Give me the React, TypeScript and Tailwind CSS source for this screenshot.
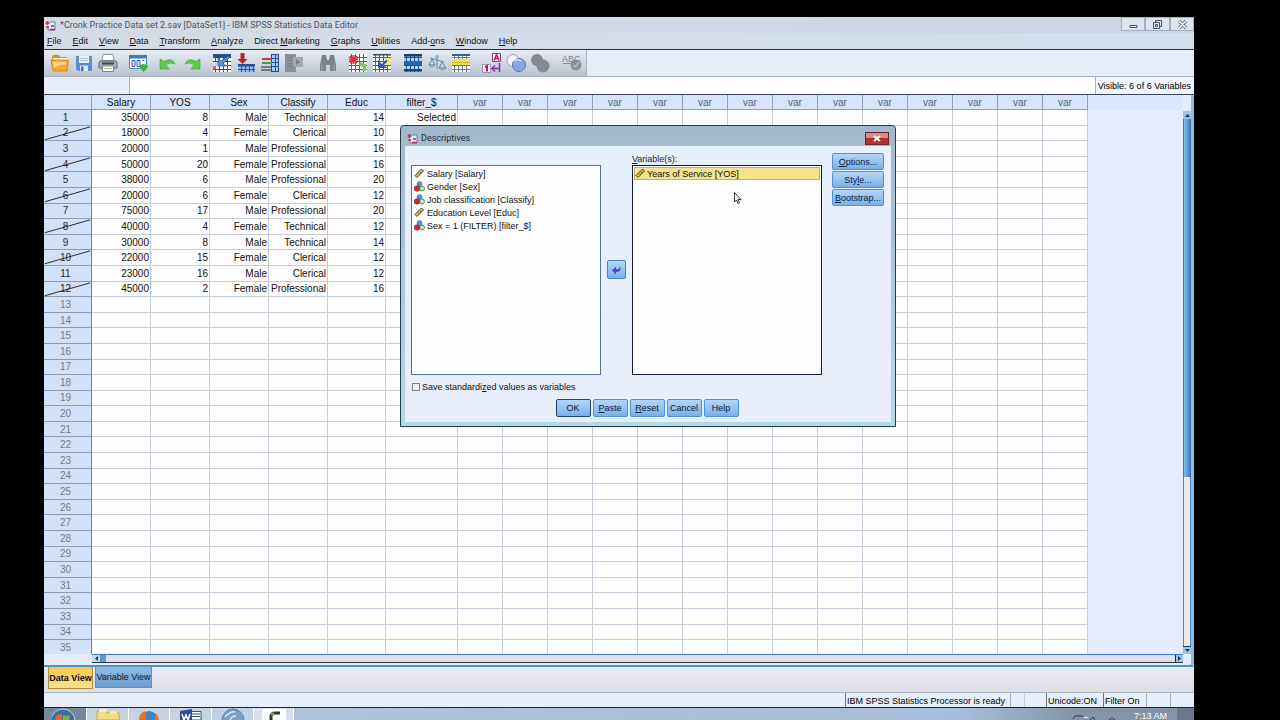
import React from 'react';

type Row = {
  salary: number;
  yos: number;
  sex: string;
  job: string;
  educ: number;
  filter: string;
};

const rows: Row[] = [
  { salary: 35000, yos: 8, sex: 'Male', job: 'Technical', educ: 14, filter: 'Selected' },
  { salary: 18000, yos: 4, sex: 'Female', job: 'Clerical', educ: 10, filter: '' },
  { salary: 20000, yos: 1, sex: 'Male', job: 'Professional', educ: 16, filter: '' },
  { salary: 50000, yos: 20, sex: 'Female', job: 'Professional', educ: 16, filter: '' },
  { salary: 38000, yos: 6, sex: 'Male', job: 'Professional', educ: 20, filter: '' },
  { salary: 20000, yos: 6, sex: 'Female', job: 'Clerical', educ: 12, filter: '' },
  { salary: 75000, yos: 17, sex: 'Male', job: 'Professional', educ: 20, filter: '' },
  { salary: 40000, yos: 4, sex: 'Female', job: 'Technical', educ: 12, filter: '' },
  { salary: 30000, yos: 8, sex: 'Male', job: 'Technical', educ: 14, filter: '' },
  { salary: 22000, yos: 15, sex: 'Female', job: 'Clerical', educ: 12, filter: '' },
  { salary: 23000, yos: 16, sex: 'Male', job: 'Clerical', educ: 12, filter: '' },
  { salary: 45000, yos: 2, sex: 'Female', job: 'Professional', educ: 16, filter: '' },
];

const ROW_COUNT = 35;
const columns = ['Salary', 'YOS', 'Sex', 'Classify', 'Educ', 'filter_$'];
const emptyColumns = Array.from({ length: 14 }, (_, i) => i);

// [before, access key, after]
const menus: [string, string, string][] = [
  ['', 'F', 'ile'],
  ['', 'E', 'dit'],
  ['', 'V', 'iew'],
  ['', 'D', 'ata'],
  ['', 'T', 'ransform'],
  ['', 'A', 'nalyze'],
  ['Direct ', 'M', 'arketing'],
  ['', 'G', 'raphs'],
  ['', 'U', 'tilities'],
  ['Add-', 'o', 'ns'],
  ['', 'W', 'indow'],
  ['', 'H', 'elp'],
];

const Key: React.FC<{ text: [string, string, string] }> = ({ text }) => (
  <span className="whitespace-pre">
    {text[0]}
    <span className="underline">{text[1]}</span>
    {text[2]}
  </span>
);

/* ---------- icons ---------- */

const Svg: React.FC<{ children: React.ReactNode }> = ({ children }) => (
  <svg width="20" height="20" viewBox="0 0 20 20" fill="none" aria-hidden="true">
    {children}
  </svg>
);

const GridLines: React.FC<{ color: string }> = ({ color }) => (
  <path d="M1 4.5h18M1 8.5h18M1 12.5h18M1 16.5h18M3.5 1v18M7.5 1v18M11.5 1v18M15.5 1v18" stroke={color} />
);

const FolderIcon = () => (
  <Svg>
    <path d="M2 4l1-2h6l1 2h7v4H2z" fill="#e08a1e" />
    <path d="M3 5h14v5H3z" fill="#fff6d8" />
    <path d="M1 7h17.5l-1.5 11H3z" fill="#f9a83a" stroke="#e2861c" />
    <path d="M3 9h13l-1 3Q9 11 4 15z" fill="#ffd98a" />
  </Svg>
);

const SaveIcon = () => (
  <Svg>
    <path d="M2 3h16v15H4l-2-2z" fill="#5b8fc9" />
    <path d="M5 3h10v7H5z" fill="#e6f0fb" />
    <path d="M6 5.5h8M6 7.5h8" stroke="#a9c6e6" />
    <path d="M6 12.5h8V18H6z" fill="#dce6ee" />
    <path d="M7 13.5h2.5V18H7z" fill="#4a6f9c" />
  </Svg>
);

const PrintIcon = () => (
  <Svg>
    <path d="M5 1.5h10l1 6H4z" fill="#fff" stroke="#8b98a6" />
    <path d="M2 8h16l1 2v5H1v-5z" fill="#a7afb8" stroke="#5d6771" />
    <path d="M4 10.5h12" stroke="#3f474f" strokeWidth="2" />
    <path d="M4.5 13h11v5.5h-11z" fill="#fff" stroke="#7b8794" />
    <path d="M6 15.5h8" stroke="#9fc66a" />
  </Svg>
);

const RecallIcon = () => (
  <Svg>
    <path d="M1.5 2.5h17v13h-17z" fill="#fff" stroke="#4e86bd" />
    <path d="M1 2h18v3.5H1z" fill="#3f7ab8" />
    <path d="M4 7.5h3v6H4zM9 7.5h3v6H9z" fill="#cfe0f4" stroke="#3b6ea8" />
    <path d="M14 7.5h2.5" stroke="#3b6ea8" />
    <path d="M12 12l3.5-1 4 1v3l-4 4-3.5-4z" fill="#3cb33a" />
  </Svg>
);

const UndoIcon = () => (
  <Svg>
    <path d="M2 6v10h9l-3-3.5q3-4 9-1.5Q14 4 6 8.5z" fill="#5ecb4c" stroke="#3ca634" strokeWidth=".7" />
  </Svg>
);

const RedoIcon = () => (
  <Svg>
    <path d="M18 6v10H9l3-3.5Q9 8.5 3 11q3-7 11-2.5z" fill="#5ecb4c" stroke="#3ca634" strokeWidth=".7" />
  </Svg>
);

const GoToCaseIcon = () => (
  <Svg>
    <path d="M1 1h18v18H1z" fill="#fff" />
    <path d="M1 1h18v4H1z" fill="#1f4f8c" />
    <GridLines color="#27568f" />
    <path d="M1 9h6v4H1z" fill="#c9dff8" />
    <path d="M1 13h3v3H1z" fill="#e45a6b" />
    <path d="M6 5v8h8l-3-2.5 7-6.5-2-1-7 5z" fill="#5b93d6" stroke="#1f4f8c" strokeWidth=".7" />
  </Svg>
);

const GoToVariableIcon = () => (
  <Svg>
    <path d="M2 11h17v8H2z" fill="#8fb9ea" />
    <path d="M2 11h17v2.5H2z" fill="#1f4f8c" />
    <path d="M2 16.5h17M5.5 11v8M9.5 11v8M13.5 11v8M17.5 11v8" stroke="#285a96" />
    <path d="M4.5 0h4v6h3L6.5 11l-5-5h3z" fill="#c3202f" />
  </Svg>
);

const VariablesIcon = () => (
  <Svg>
    <path d="M11 1h8v18h-8z" fill="#a9caf0" />
    <path d="M11 1.5h8M11 5.5h8M11 9.5h8M11 13.5h8M11 18.5h8M11.5 1v18M15.5 1v18M18.5 1v18" stroke="#1f4f8c" />
    <path d="M2 6h10" stroke="#d9303f" strokeWidth="2" />
    <path d="M2 10h10" stroke="#3ca634" strokeWidth="2" />
    <path d="M1 14h10M1 17h10" stroke="#5a5f66" strokeWidth="1.5" />
  </Svg>
);

const RunIcon = () => (
  <Svg>
    <path d="M1 1h11v18H1z" fill="#8b9098" />
    <path d="M9 4h10v10H9z" fill="#a4a9b0" />
    <path d="M12 6l4 3-4 3z" fill="#7a7f87" />
    <path d="M3 4.5h6M3 7.5h5M3 10.5h5M3 13.5h7" stroke="#7a7f87" />
  </Svg>
);

const FindIcon = () => (
  <Svg>
    <path d="M4 2h4l1 5h2l1-5h4l2 10v6h-6v-6H8v6H2v-6z" fill="#7d838b" />
    <path d="M4 12v5M16 12v5" stroke="#a5abb3" />
  </Svg>
);

const InsertCasesIcon = () => (
  <Svg>
    <path d="M1 1h18v18H1z" fill="#fff" />
    <GridLines color="#4a6285" />
    <path d="M2 3l7 7M9 3l-7 7M1 6.5h9M5.5 2v9" stroke="#e0303c" strokeWidth="2" />
    <path d="M12 9l6 2v7h-3v-4l-4-1z" fill="#6fd05e" />
  </Svg>
);

const InsertVariableIcon = () => (
  <Svg>
    <path d="M1 1h18v18H1z" fill="#fff" />
    <GridLines color="#4a6285" />
    <path d="M13 5h6v7h-6z" fill="#f5e48a" />
    <path d="M6 7v8h9l-3-3 4-4-2-1-4 4z" fill="#3d56b0" />
    <path d="M1 1h18v1.5H1z" fill="#2c4871" />
  </Svg>
);

const SplitIcon = () => (
  <Svg>
    <path d="M1 1h18v18H1z" fill="#b8d4f4" />
    <GridLines color="#1f4f8c" />
    <path d="M1 1h18v2.5H1z" fill="#16406f" />
    <path d="M1 8h18v4H1z" fill="#1e6ab0" />
    <path d="M1 17.5h18" stroke="#16406f" strokeWidth="2" />
  </Svg>
);

const WeightIcon = () => (
  <Svg>
    <path d="M10 2v14M3 5l14 4M5 6l-3 6h6zM15 9l-3 6h7z" stroke="#5789a8" />
    <path d="M2 12h6q-3 4-6 0zM12 15h7q-4 4-7 0z" fill="#a9cbe0" stroke="#5789a8" strokeWidth=".7" />
    <circle cx="10" cy="4" r="2" fill="#8fb6cf" />
  </Svg>
);

const SelectCasesIcon = () => (
  <Svg>
    <path d="M1 1h18v18H1z" fill="#fff" />
    <GridLines color="#6a7a92" />
    <path d="M1 1h18v2H1z" fill="#2f5f96" />
    <path d="M1 6h18v6H1z" fill="#f2e04a" />
    <path d="M1 9.5h18" stroke="#c9b52e" />
  </Svg>
);

const ValueLabelsIcon = () => (
  <Svg>
    <path d="M10.5.5h8v8h-8z" fill="#fff" stroke="#8a3c7d" />
    <path d="M12 7.5l2.5-6 2.5 6M13 5.5h3" stroke="#c2185b" strokeWidth="1.5" />
    <path d="M.5 11.5h8v8h-8z" fill="#fff" stroke="#a58ab8" />
    <path d="M3 14l2-1v5.5" stroke="#c2185b" strokeWidth="2" />
    <path d="M10 15.5h7M13 12.5l-3 3 3 3M17.5 10v9" stroke="#8a2fa0" strokeWidth="1.5" />
  </Svg>
);

const UseSetsIcon = () => (
  <Svg>
    <circle cx="7" cy="7.5" r="6" fill="#f2f6fc" stroke="#8fa3bf" />
    <circle cx="13" cy="12" r="6.5" fill="#7f9fe0" fillOpacity=".85" stroke="#5673b5" />
    <path d="M8 8q4-3 7 0" stroke="#dfe8fa" strokeWidth="1.5" />
  </Svg>
);

const ShowAllIcon = () => (
  <Svg>
    <circle cx="7" cy="7" r="6" fill="#858a92" />
    <circle cx="13" cy="13" r="6.5" fill="#858a92" />
  </Svg>
);

const SpellIcon = () => (
  <Svg>
    <text x="0" y="9" fontSize="9" fontFamily="Liberation Sans, sans-serif" fill="#7a7f87">ABC</text>
    <path d="M1 10.5h17" stroke="#8b9098" />
    <circle cx="14" cy="12" r="5.5" fill="#8b9098" />
    <path d="M11 12l2 2 4-5" stroke="#b5bac2" strokeWidth="1.5" />
  </Svg>
);

const toolGroups: { name: string; icon: React.FC }[][] = [
  [
    { name: 'Open', icon: FolderIcon },
    { name: 'Save', icon: SaveIcon },
    { name: 'Print', icon: PrintIcon },
  ],
  [{ name: 'Recall dialog', icon: RecallIcon }],
  [
    { name: 'Undo', icon: UndoIcon },
    { name: 'Redo', icon: RedoIcon },
  ],
  [
    { name: 'Go to case', icon: GoToCaseIcon },
    { name: 'Go to variable', icon: GoToVariableIcon },
    { name: 'Variables', icon: VariablesIcon },
    { name: 'Run statistics', icon: RunIcon },
  ],
  [{ name: 'Find', icon: FindIcon }],
  [
    { name: 'Insert cases', icon: InsertCasesIcon },
    { name: 'Insert variable', icon: InsertVariableIcon },
  ],
  [
    { name: 'Split file', icon: SplitIcon },
    { name: 'Weight cases', icon: WeightIcon },
    { name: 'Select cases', icon: SelectCasesIcon },
  ],
  [
    { name: 'Value labels', icon: ValueLabelsIcon },
    { name: 'Use variable sets', icon: UseSetsIcon },
    { name: 'Show all variables', icon: ShowAllIcon },
  ],
  [{ name: 'Spell check', icon: SpellIcon }],
];

const AppIcon = () => (
  <svg width="11" height="11" viewBox="0 0 11 11" fill="none" aria-hidden="true">
    <path d="M5 2h5v8H3V6" fill="#e4edf6" stroke="#6b7f9c" />
    <path d="M2.5 5V1M.5 3h4M1 7h3" stroke="#d3205f" strokeWidth="1.5" />
    <path d="M5 9.5h5" stroke="#b8245c" strokeWidth="1.5" />
    <path d="M6 5h3v2H6z" fill="#4f86a8" />
  </svg>
);

const ScaleIcon = () => (
  <svg width="11" height="11" viewBox="0 0 11 11" fill="none" aria-hidden="true">
    <path d="M1 7.5L7.5 1l2 2-6.5 6.5z" fill="#d9c25a" stroke="#4d4620" />
    <path d="M4 5.5l1 1M6 4l1 1" stroke="#4d4620" />
  </svg>
);

const NominalIcon = () => (
  <svg width="11" height="11" viewBox="0 0 11 11" fill="none" aria-hidden="true">
    <circle cx="5.5" cy="3" r="2.5" fill="#5a8fd0" stroke="#2f5f9c" strokeWidth=".5" />
    <circle cx="8" cy="7.5" r="2.5" fill="#bfe8c4" stroke="#3f9a55" />
    <circle cx="3" cy="7.5" r="2.8" fill="#c92a2f" stroke="#7c1b20" strokeWidth=".5" />
  </svg>
);

/* ---------- editor ---------- */

const TitleBar = () => (
  <header className="flex h-4 shrink-0 items-center bg-linear-to-r from-[#d5dbe4] to-[#cbd6e4] pl-px">
    <AppIcon />
    <h1 className="ml-1 flex-1 font-['Roboto'] text-[9px] leading-3 text-[#4b5563]">
      *Cronk Practice Data set 2.sav [DataSet1] - IBM SPSS Statistics Data Editor
    </h1>
    <div className="flex self-start text-[#4a5563]">
      <button aria-label="Minimize" className="flex h-[14px] w-6 items-center justify-center border border-[#a3afbf] bg-[#dce4ee]">
        <svg width="9" height="9" viewBox="0 0 9 9" fill="none"><path d="M1 5.5h7v2H1z" stroke="currentColor" fill="#fff" /></svg>
      </button>
      <button aria-label="Restore" className="flex h-[14px] w-[25px] items-center justify-center border border-[#a3afbf] bg-[#dce4ee]">
        <svg width="9" height="9" viewBox="0 0 9 9" fill="none"><path d="M2.5 2.5V.5h6v6h-2M.5 2.5h6v6h-6zM2.5 4.5h2v2h-2z" stroke="currentColor" /></svg>
      </button>
      <button aria-label="Close" className="flex h-[14px] w-6 items-center justify-center border border-[#a3afbf] bg-[#dce4ee]">
        <svg width="9" height="9" viewBox="0 0 9 9" fill="none">
          <path d="M1 1l7 7M8 1L1 8" stroke="currentColor" strokeWidth="3" />
          <path d="M1 1l7 7M8 1L1 8" stroke="#fff" strokeWidth="1.5" />
        </svg>
      </button>
    </div>
  </header>
);

const MenuBar = () => (
  <nav className="flex h-[17px] shrink-0 items-center gap-[11px] border-b border-[#2a3140] bg-linear-to-r from-[#d5dbe4] to-[#d3deec] pl-[3px] text-[9px] leading-3 text-[#111]">
    {menus.map((m) => (
      <button key={m.join('')}>
        <Key text={m} />
      </button>
    ))}
  </nav>
);

const ToolBar = () => (
  <div className="flex h-[26px] shrink-0 bg-[#e6ecf9]">
    <div className="flex items-center gap-1.5 border-r border-[#a9b2c0] bg-linear-to-b from-[#e9edf4] to-[#b9c2cf] pl-1 pr-0.5">
      {toolGroups.map((group, i) => (
        <div key={i} className={i === 4 ? 'ml-1 flex' : i === 8 ? 'ml-0.5 flex' : i > 5 ? 'ml-px flex' : 'flex'}>
          {group.map(({ name, icon: Icon }) => (
            <button key={name} aria-label={name} className="flex w-6 justify-center">
              <Icon />
            </button>
          ))}
        </div>
      ))}
    </div>
  </div>
);

const CellBar = () => (
  <div className="flex h-[19px] shrink-0 items-stretch border-y border-t-[#aab3c2] border-b-[#39465c] bg-[#eef2fb] text-[9px] leading-3">
    <div className="w-[86px] border-r border-[#aab3c2] bg-[#e8edf8]" />
    <input aria-label="Cell value" className="min-w-0 flex-1 bg-white outline-none" />
    <div className="flex items-center border-l border-[#aab3c2] bg-[#f1f4fc] pl-0.5 pr-[3px] text-black">Visible: 6 of 6 Variables</div>
  </div>
);

const cell = 'border-b border-r border-[#c6ccda] p-0 pr-px pt-px text-right';
const colHead = 'border-b border-r border-b-[#8d9cb8] border-r-[#8d9cb8] bg-[#d6e3fa] p-0 pt-px font-normal';

const DataGrid = () => (
  <table className="h-[561px] w-[1044px] table-fixed border-separate border-spacing-0 bg-[#fdfdfe] text-[10px] leading-3 text-[#111]">
    <colgroup>
      <col className="w-12" />
      <col className="w-[59px]" />
      <col className="w-[59px]" />
      <col className="w-[59px]" />
      <col className="w-[59px]" />
      <col className="w-[58px]" />
      <col className="w-[72px]" />
      {emptyColumns.map((i) => (
        <col key={i} className="w-[45px]" />
      ))}
    </colgroup>
    <thead>
      <tr className="h-[15px]">
        <th className={colHead} />
        {columns.map((name) => (
          <th key={name} scope="col" className={colHead}>{name}</th>
        ))}
        {emptyColumns.map((i) => (
          <th key={i} scope="col" className={`${colHead} text-[#5a6478]`}>var</th>
        ))}
      </tr>
    </thead>
    <tbody>
      {Array.from({ length: ROW_COUNT }, (_, i) => {
        const row = rows[i];
        const filtered = row !== undefined && row.sex === 'Female';
        return (
          <tr key={i}>
            <th
              scope="row"
              className={`relative border-b border-r border-b-[#8d9cb8] border-r-[#6f809e] bg-[#d3e1f8] p-0 pr-1 pt-px font-normal ${row ? 'text-[#222b3a]' : 'text-[#707b90]'}`}
            >
              {i + 1}
              {filtered && (
                <svg className="absolute inset-0 h-full w-full" viewBox="0 0 48 16" preserveAspectRatio="none" aria-hidden="true">
                  <path d="M1 15L47 1" stroke="#222" />
                </svg>
              )}
            </th>
            <td className={cell}>{row?.salary}</td>
            <td className={cell}>{row?.yos}</td>
            <td className={cell}>{row?.sex}</td>
            <td className={cell}>{row?.job}</td>
            <td className={cell}>{row?.educ}</td>
            <td className={cell}>{row?.filter}</td>
            {emptyColumns.map((c) => (
              <td key={c} className={cell} />
            ))}
          </tr>
        );
      })}
    </tbody>
  </table>
);

const ArrowGlyph: React.FC<{ d: string }> = ({ d }) => (
  <svg width="7" height="7" viewBox="0 0 7 7" aria-hidden="true">
    <path d={d} fill="#1d3557" />
  </svg>
);

const VerticalScroll = () => (
  <div className="flex w-2 flex-col pt-4">
    <button aria-label="Scroll up" className="flex h-2 items-center justify-center bg-[#9cc4e8]">
      <ArrowGlyph d="M1 5l2.5-3L6 5z" />
    </button>
    <div className="grow-[68] border-l border-[#2f7fc4] bg-linear-to-r from-[#7cc0f0] via-[#5b9bd6] to-[#3d6ea3]" />
    <div className="grow-[32] border-x border-[#4f86bd] bg-[#e9ebf1]" />
    <button aria-label="Scroll down" className="flex h-2 items-center justify-center border-t border-[#1d3557] bg-[#9cc4e8]">
      <ArrowGlyph d="M1 2h5L3.5 5z" />
    </button>
  </div>
);

const HorizontalScroll = () => (
  <div className="flex h-[9px] shrink-0 pl-12 pr-2">
    <div className="flex flex-1 border-b border-t border-b-[#27324a] border-t-[#3f76c4] bg-[#dfdfe9]">
      <button aria-label="Scroll left" className="flex w-2 items-center justify-center bg-[#c3dcf3]">
        <ArrowGlyph d="M5 1v5L2 3.5z" />
      </button>
      <div className="w-1.5 bg-[#5b9bd6]" />
      <div className="flex-1" />
      <button aria-label="Scroll right" className="flex w-2 items-center justify-center border-l border-[#27324a] bg-[#9cc4e8]">
        <ArrowGlyph d="M2 1v5l3-2.5z" />
      </button>
    </div>
  </div>
);

const ViewTabs = () => (
  <div className="flex h-[25px] shrink-0 items-start gap-0.5 bg-linear-to-b from-[#e9ebf5] to-[#dddde3] pl-1 text-[9px] leading-3 text-[#111]">
    <button className="h-[22px] w-[45px] whitespace-nowrap border border-t-0 border-[#b08d3a] bg-linear-to-b from-[#f9c64a] to-[#fde08c] font-bold">Data View</button>
    <button className="h-[21px] w-[57px] whitespace-nowrap border border-t-0 border-[#6d90b8] bg-linear-to-b from-[#8fbce8] to-[#6f9fd0]">Variable View</button>
  </div>
);

const StatusBar = () => (
  <footer className="flex h-4 shrink-0 items-stretch border-b border-t border-b-[#1b2433] border-t-[#aab3c2] bg-[#e6eefa] text-[9px] leading-4 text-black">
    <div className="flex-1" />
    <div className="w-[165px] border-l border-[#6d7687] pl-px">IBM SPSS Statistics Processor is ready</div>
    <div className="w-3.5 border-l border-[#a6afbe]" />
    <div className="w-[22px] border-l border-[#c6ccda]" />
    <div className="w-[57px] border-l border-[#6d7687] pl-px">Unicode:ON</div>
    <div className="w-[43px] border-l border-[#6d7687] pl-px">Filter On</div>
    <div className="w-6 border-l border-[#a6afbe]" />
    <div className="w-6 border-l border-[#a6afbe]" />
  </footer>
);

const TaskBar = () => (
  <div className="flex h-3 shrink-0 items-start overflow-hidden bg-linear-to-r from-[#b3c2d6] via-[#a7bcdb] via-80% to-[#8593a8] to-90%">
    <button aria-label="Start" className="flex h-3 w-[42px] justify-center bg-[#77879c]">
      <svg width="26" height="12" viewBox="0 0 26 12" fill="none">
        <circle cx="11" cy="13" r="12" fill="#3f6f9c" stroke="#b9cbe0" />
        <path d="M4 8q3-3 6-1v5H3z" fill="#e2662c" />
        <path d="M11 7q4 2 7 0l-1 5h-6z" fill="#7cb342" />
      </svg>
    </button>
    <button aria-label="Explorer" className="flex h-3 w-[42px] justify-center border-l border-white bg-[#c9d3df]">
      <svg width="24" height="12" viewBox="0 0 24 12" fill="none">
        <path d="M1 3h9l1 2h12v7H1z" fill="#f0dd86" stroke="#c9ac4c" />
        <path d="M3 1h8v3H3zM14 3h7v3h-7z" fill="#f7edb0" />
      </svg>
    </button>
    <button aria-label="Firefox" className="flex h-3 w-[41px] justify-center border-l border-white bg-[#c9d3df]">
      <svg width="24" height="12" viewBox="0 0 24 12" fill="none">
        <circle cx="12" cy="12" r="9" fill="#3a86c8" />
        <path d="M2 12Q2 5 8 3q-1 3 2 3-2 2-1 6zM18 5q4 3 4 7h-4z" fill="#e8742c" />
      </svg>
    </button>
    <button aria-label="Word" className="flex h-3 w-[42px] justify-center border-l border-white bg-[#c9d3df]">
      <svg width="24" height="12" viewBox="0 0 24 12" fill="none">
        <path d="M10 3.5h12V12H10z" fill="#fff" stroke="#2b5797" />
        <path d="M13 6h8M13 8.5h8" stroke="#2b5797" />
        <path d="M1 3l12-2v11H1z" fill="#2b4f91" />
        <path d="M3 6l2 6 2-5 2 5 2-6" stroke="#fff" strokeWidth="1.5" />
      </svg>
    </button>
    <button aria-label="Statistics" className="flex h-3 w-[42px] justify-center border-l border-white bg-[#c3d1e2]">
      <svg width="24" height="12" viewBox="0 0 24 12" fill="none">
        <circle cx="12" cy="12" r="11" fill="#7c9fc7" stroke="#5d81ab" />
        <path d="M4 9q6-6 10-5M9 12q2-4 6-4" stroke="#dbe7f4" strokeWidth="1.5" />
      </svg>
    </button>
    <button aria-label="Recorder" className="flex h-3 w-[41px] justify-center border-x border-white bg-[#d9e0e9]">
      <svg width="24" height="12" viewBox="0 0 24 12" fill="none">
        <path d="M0 1h24v11H0z" fill="#fff" />
        <path d="M18 5h-5q-4 0-4 4v3" stroke="#2f3a2a" strokeWidth="3" />
        <path d="M9 6h3" stroke="#6ab04c" strokeWidth="3" />
      </svg>
    </button>
    <div className="flex-1" />
    <svg width="50" height="12" viewBox="0 0 50 12" fill="none" aria-hidden="true">
      <path d="M1 11q1-4 6-3h4M18 12l3-3 2 3M37 12l3-2 3 2" stroke="#2d3748" />
      <path d="M12 9.5h4" stroke="#e6edf5" />
    </svg>
    <span className="mr-2.5 mt-0.5 pl-3 font-['Liberation_Sans'] text-[9px] leading-3 text-white">7:13 AM</span>
    <div className="h-3 w-[17px] bg-[#6b788c]" />
  </div>
);

/* ---------- dialog ---------- */

const sourceVariables = [
  { label: 'Salary [Salary]', icon: ScaleIcon },
  { label: 'Gender [Sex]', icon: NominalIcon },
  { label: 'Job classification [Classify]', icon: NominalIcon },
  { label: 'Education Level [Educ]', icon: ScaleIcon },
  { label: 'Sex = 1 (FILTER) [filter_$]', icon: NominalIcon },
];

const sideButtons: [string, string, string][] = [
  ['', 'O', 'ptions...'],
  ['Sty', 'l', 'e...'],
  ['', 'B', 'ootstrap...'],
];

const bottomButtons: [string, string, string][] = [
  ['OK', '', ''],
  ['', 'P', 'aste'],
  ['', 'R', 'eset'],
  ['Cancel', '', ''],
  ['Help', '', ''],
];

const blueButton = 'rounded-[2px] border bg-linear-to-b from-[#b4d5f8] to-[#78b0ec] text-[#0f1c33]';

const DescriptivesDialog = () => (
  <div
    role="dialog"
    aria-labelledby="dialog-title"
    className="absolute left-[400px] top-[125px] w-[496px] rounded-t border border-[#24404d] bg-linear-to-b from-[#a3b8cd] to-[#b4d9e6] px-1 pb-1 text-[9px] leading-3 text-[#111]"
  >
    <div className="flex h-5 items-center pl-0.5 pt-1">
      <AppIcon />
      <h2 id="dialog-title" className="ml-[3px] flex-1 font-['Roboto'] text-[9px] text-[#1d2b3f]">Descriptives</h2>
      <button aria-label="Close dialog" className="mr-0.5 flex h-[13px] w-6 items-center justify-center border border-[#6e2529] bg-linear-to-b from-[#d98d88] from-50% to-[#b5302e] to-50%">
        <svg width="8" height="7" viewBox="0 0 8 7" fill="none">
          <path d="M1 1l6 5M7 1L1 6" stroke="#fff" strokeWidth="2" />
        </svg>
      </button>
    </div>

    <div className="bg-linear-to-b from-[#e6f0fb] to-[#e8edfa] px-1.5 pb-[5px] pt-[7px]">
      <div className="flex items-end">
        <ul role="listbox" aria-label="Available variables" className="h-[210px] w-[190px] border border-[#52719e] bg-[#fdfdfe] px-0.5 pt-px">
          {sourceVariables.map(({ label, icon: Icon }) => (
            <li key={label} role="option" aria-selected="false" className="flex h-[13px] items-center gap-0.5">
              <Icon />
              {label}
            </li>
          ))}
        </ul>

        <button aria-label="Move variable" className={`${blueButton} mx-1.5 mb-24 flex h-[19px] w-[19px] items-center justify-center border-[#4c82b5]`}>
          <svg width="10" height="10" viewBox="0 0 10 10" fill="none">
            <path d="M0 5.5l4-4V4q3 1 4-2.5Q10 7 4 7v2.5z" fill="#5048c0" />
          </svg>
        </button>

        <div>
          <div id="variables-label" className="text-[#222]">
            <Key text={['', 'V', 'ariable(s):']} />
          </div>
          <ul role="listbox" aria-labelledby="variables-label" className="h-[210px] w-[190px] border border-[#17183f] bg-[#fdfdfe] px-px pt-px">
            <li role="option" aria-selected="true" className="flex h-[13px] items-center gap-px border border-[#cdb356] bg-[#f4e38d]">
              <ScaleIcon />
              Years of Service [YOS]
            </li>
          </ul>
        </div>

        <div className="ml-2.5 flex flex-col gap-px self-start">
          {sideButtons.map((b) => (
            <button key={b.join('')} className={`${blueButton} h-[17px] w-[52px] border-[#4f93d2]`}>
              <Key text={b} />
            </button>
          ))}
        </div>
      </div>

      <label className="mt-1.5 flex h-3 items-center gap-0.5 pl-px">
        <input type="checkbox" className="h-2 w-2 appearance-none border border-[#7d8796] bg-[#f1f2f5]" />
        <Key text={['Save standardi', 'z', 'ed values as variables']} />
      </label>

      <div className="mt-1.5 flex justify-center gap-0.5 pr-0.5">
        {bottomButtons.map((b, i) => (
          <button key={b.join('')} className={`${blueButton} h-[18px] w-[35px] ${i === 0 ? 'border-[#24406e]' : 'border-[#4f93d2]'}`}>
            <Key text={b} />
          </button>
        ))}
      </div>
    </div>
  </div>
);

const App: React.FC = () => (
  <div className="relative h-screen overflow-hidden bg-black pl-11 pr-[86px] pt-[17px] font-['Liberation_Sans',sans-serif]">
    <main className="flex h-full flex-col">
      <TitleBar />
      <MenuBar />
      <ToolBar />
      <CellBar />

      <section className="flex min-h-0 flex-1 flex-col border-b-2 border-r-[3px] border-b-[#4b93bd] border-r-[#8fbbe0] bg-[#e4ebfa] pb-0.5">
        <div className="flex min-h-0 flex-1 overflow-hidden">
          <DataGrid />
          <div className="flex-1">
            <div className="h-[15px] bg-[#d9e6fb]" />
          </div>
          <VerticalScroll />
        </div>
        <HorizontalScroll />
      </section>

      <ViewTabs />
      <StatusBar />
      <TaskBar />
    </main>

    <DescriptivesDialog />

    {/* mouse pointer */}
    <svg className="absolute left-[734px] top-[192px]" width="8" height="12" viewBox="0 0 8 12" aria-hidden="true">
      <path d="M.5.5v9.500l2-2 1.500 3.500 1.500-.7L4 7.500h3z" fill="#fff" stroke="#222" strokeWidth=".9" />
    </svg>
  </div>
);

export default App;
